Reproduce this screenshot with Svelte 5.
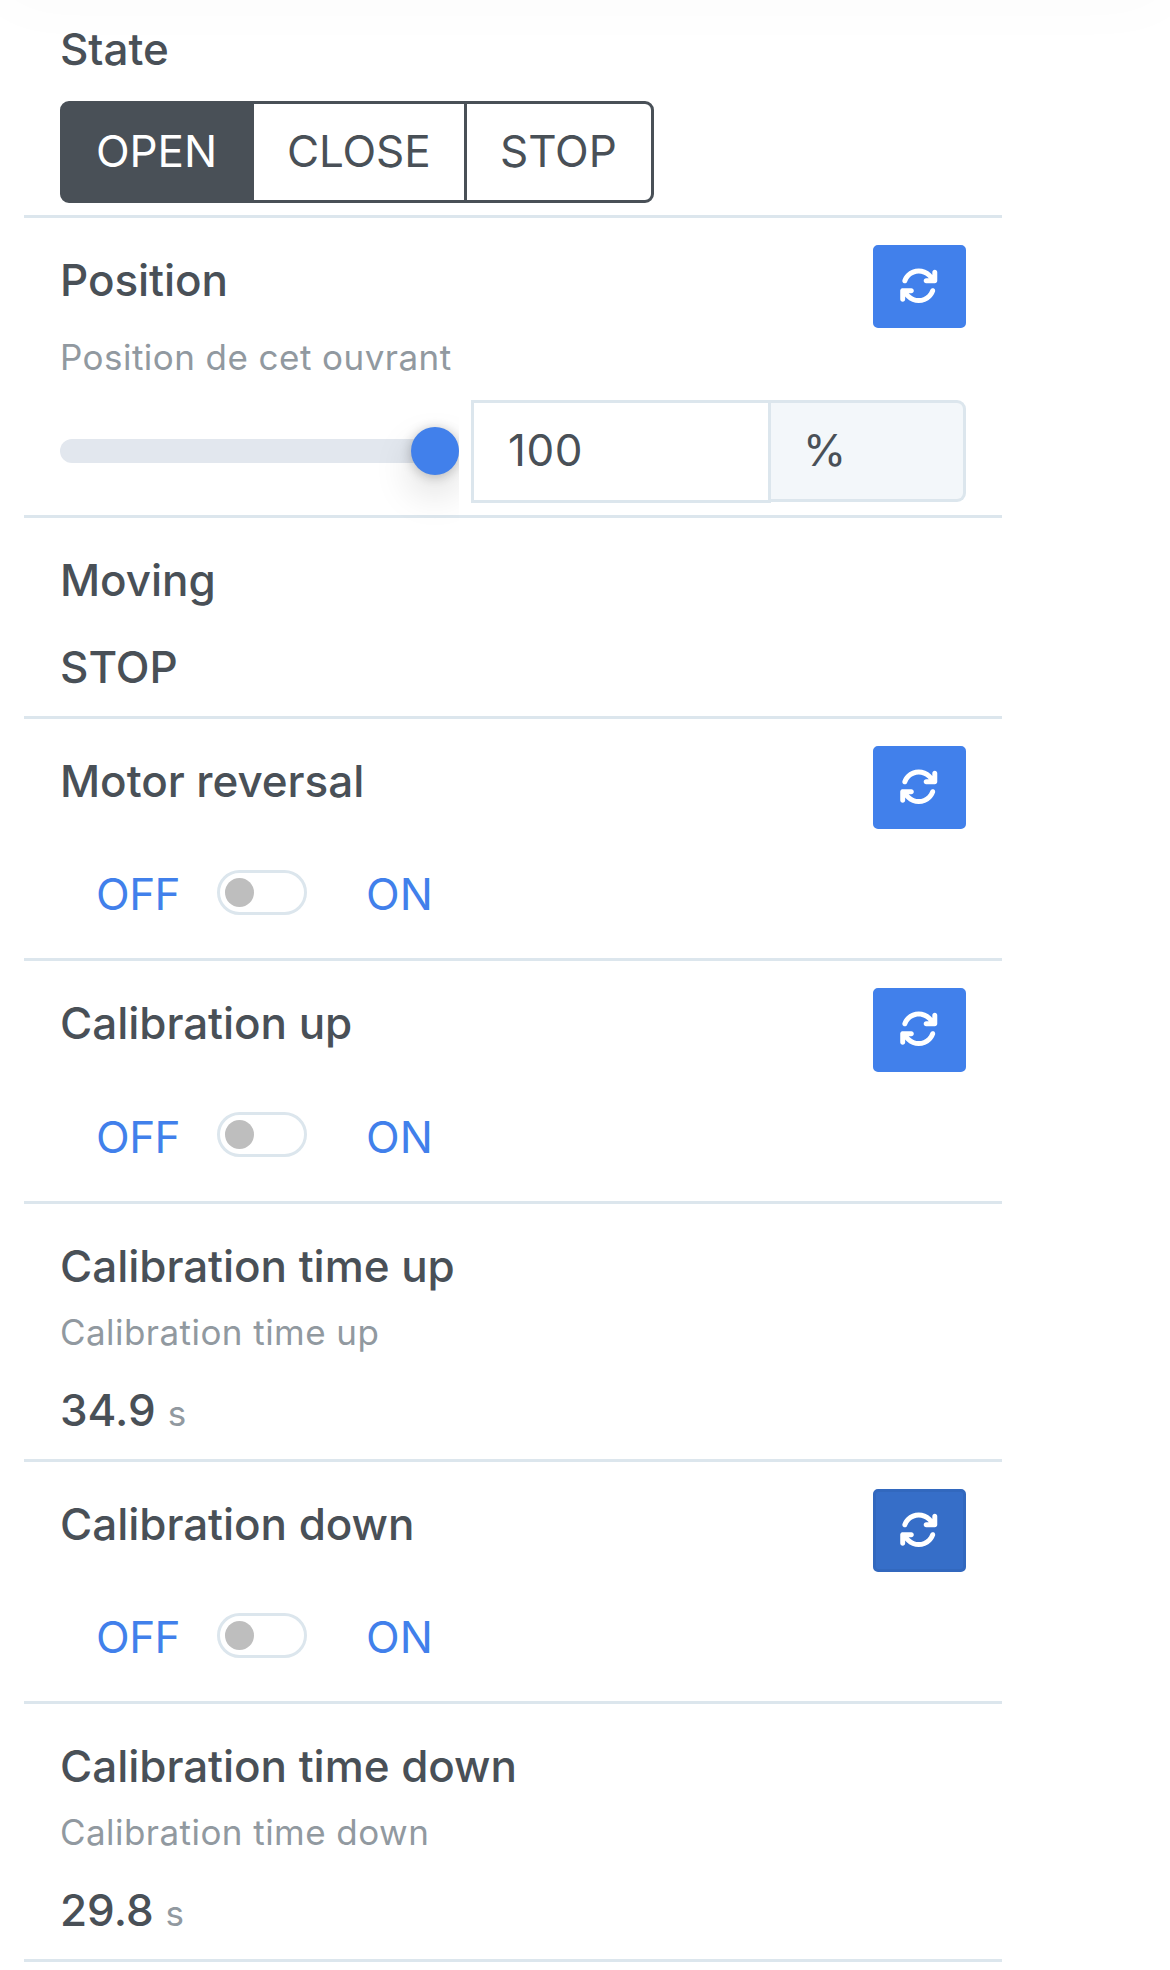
<script lang="ts">
	type Feature = {
		kind: 'state' | 'position' | 'value' | 'switch';
		label: string;
		description?: string;
		value?: string;
		unit?: string;
		refresh?: boolean;
		active?: boolean;
	};

	const features: Feature[] = [
		{ kind: 'state', label: 'State' },
		{
			kind: 'position',
			label: 'Position',
			description: 'Position de cet ouvrant',
			refresh: true
		},
		{ kind: 'value', label: 'Moving', value: 'STOP' },
		{ kind: 'switch', label: 'Motor reversal', refresh: true },
		{ kind: 'switch', label: 'Calibration up', refresh: true },
		{
			kind: 'value',
			label: 'Calibration time up',
			description: 'Calibration time up',
			value: '34.9',
			unit: 's'
		},
		{ kind: 'switch', label: 'Calibration down', refresh: true, active: true },
		{
			kind: 'value',
			label: 'Calibration time down',
			description: 'Calibration time down',
			value: '29.8',
			unit: 's'
		}
	];

	const states = ['OPEN', 'CLOSE', 'STOP'];

	let selected = $state('OPEN');
	let position = $state(100);
</script>

<main class="page">
	<div class="header-shadow"></div>

	<ul class="features">
		{#each features as feature}
			<li class="feature feature--{feature.kind}" class:has-description={feature.description}>
				<div class="feature__head" class:feature__head--action={feature.refresh}>
					<h3 class="feature__label">{feature.label}</h3>
					{#if feature.refresh}
						<button class="refresh" class:active={feature.active} aria-label="Refresh">
							<svg viewBox="0 0 512 512" aria-hidden="true">
								<path
									d="M105.1 202.6c7.7-21.8 20.2-42.3 37.8-59.8c62.5-62.5 163.8-62.5 226.3 0L386.3 160H352c-17.7 0-32 14.3-32 32s14.3 32 32 32H463.5h.4c17.7 0 32-14.3 32-32V80c0-17.7-14.3-32-32-32s-32 14.3-32 32v35.2L414.4 97.6c-87.5-87.5-229.3-87.5-316.8 0C73.2 122 55.6 150.7 44.8 181.4c-5.9 16.7 2.9 34.9 19.5 40.8s34.9-2.9 40.8-19.5zM39 289.3c-5 1.5-9.8 4.2-13.7 8.2c-4 4-6.7 8.8-8.1 14c-.3 1.2-.6 2.5-.8 3.8c-.3 1.7-.4 3.4-.4 5.1V432c0 17.7 14.3 32 32 32s32-14.3 32-32V396.9l17.6 17.5c87.5 87.4 229.3 87.4 316.7 0c24.4-24.4 42.1-53.1 52.9-83.7c5.9-16.7-2.9-34.9-19.5-40.8s-34.9 2.9-40.8 19.5c-7.7 21.8-20.2 42.3-37.8 59.8c-62.5 62.5-163.8 62.5-226.3 0l-.1-.1L125.6 352H160c17.7 0 32-14.3 32-32s-14.3-32-32-32H48.4c-1.6 0-3.2 .1-4.8 .3s-3.1 .5-4.6 1z"
								/>
							</svg>
						</button>
					{/if}
				</div>

				{#if feature.description}
					<p class="feature__description">{feature.description}</p>
				{/if}

				{#if feature.kind === 'state'}
					<div class="button-group">
						{#each states as state}
							<button
								class="button-group__item"
								class:selected={selected === state}
								onclick={() => (selected = state)}>{state}</button
							>
						{/each}
					</div>
				{:else if feature.kind === 'position'}
					<div class="position">
						<div class="position__range">
							<input type="range" min="0" max="100" aria-label="Position" bind:value={position} />
						</div>
						<input class="position__input" type="text" aria-label="Value" bind:value={position} />
						<span class="position__unit">%</span>
					</div>
				{:else if feature.kind === 'switch'}
					<div class="toggle">
						<span class="toggle__off">OFF</span>
						<span class="toggle__track"></span>
						<span class="toggle__on">ON</span>
					</div>
				{:else}
					<p class="feature__value">
						{feature.value}{#if feature.unit}<small>{feature.unit}</small>{/if}
					</p>
				{/if}
			</li>
		{/each}
	</ul>
</main>

<style>
	:global(body) {
		background-color: #fff;
	}

	.page {
		--text: #495057;
		--muted: #9199a0;
		--border: #dce6ed;
		--primary: #4180eb;

		position: relative;
		display: flow-root;
		height: 1970px;
		overflow: hidden;
		box-sizing: border-box;
		color: var(--text);
		font-family: Inter, 'Liberation Sans', sans-serif;
		font-size: 44px;
		line-height: 60px;
	}

	.page * {
		box-sizing: border-box;
	}

	button,
	input {
		margin: 0;
		font: inherit;
		color: inherit;
	}

	.header-shadow {
		position: absolute;
		top: -120px;
		left: 0;
		right: 0;
		height: 120px;
		box-shadow: 0 0 72px rgba(0, 0, 0, 0.025);
	}

	.features {
		width: 978px;
		margin: -13px 0 0 24px;
		padding: 0;
		list-style: none;
	}

	.feature {
		height: 201px;
		padding: 27px 36px 0;
		border-bottom: 3px solid var(--border);
	}

	.feature--state {
		height: 231px;
	}

	.feature--position {
		height: 300px;
	}

	.feature--switch {
		height: 242.4px;
	}

	.feature--value.has-description {
		height: 258px;
	}

	.feature__head {
		display: flex;
		justify-content: space-between;
		height: 72px;
	}

	.feature__head--action {
		height: 83.2px;
	}

	.feature__label {
		margin: 0;
		padding-top: 5px;
		font-size: 44px;
		font-weight: 500;
		letter-spacing: -0.05px;
	}

	.feature__description {
		margin: 4px 0 0;
		color: var(--muted);
		font-size: 35px;
		line-height: 50px;
		letter-spacing: 0.45px;
	}

	.feature__value {
		margin: 20px 0 0;
		font-weight: 500;
	}

	.has-description .feature__value {
		margin-top: 23px;
	}

	.feature__value small {
		margin-left: 12px;
		color: var(--muted);
		font-size: 35px;
		font-weight: 400;
	}

	.refresh {
		display: flex;
		align-items: center;
		justify-content: center;
		width: 93px;
		height: 83.2px;
		padding: 0 2px 2px 0;
		background-color: var(--primary);
		border: 3px solid var(--primary);
		border-radius: 5px;
	}

	.refresh.active {
		background-color: #366ec8;
		border-color: #3268be;
	}

	.refresh svg {
		width: 39.5px;
		height: 39.5px;
		fill: #fff;
	}

	.button-group {
		display: flex;
		margin-top: 15px;
	}

	.button-group__item {
		width: 194px;
		height: 102px;
		padding: 17px 0 19px 33px;
		text-align: left;
		letter-spacing: -0.1px;
		background-color: #fff;
		border: 3px solid var(--text);
	}

	.button-group__item + .button-group__item {
		width: 216px;
		margin-left: -3px;
	}

	.button-group__item:first-child {
		border-radius: 9px 0 0 9px;
	}

	.button-group .button-group__item:last-child {
		width: 190px;
		border-radius: 0 9px 9px 0;
	}

	.button-group__item.selected {
		z-index: 1;
		color: #fff;
		background-color: var(--text);
	}

	.position {
		display: flex;
		align-items: flex-start;
		margin-top: 17.8px;
	}

	/* the thumb's shadow is cut at the right end of the track */
	.position__range {
		display: flex;
		align-items: center;
		width: 399px;
		height: 102px;
		margin-right: 12px;
		clip-path: inset(-30px 0 -60px -40px);
	}

	.position__range input {
		width: 100%;
		height: 48px;
		appearance: none;
		background: none;
	}

	.position__range input::-webkit-slider-runnable-track {
		height: 24px;
		background-color: #e2e7ee;
		border-radius: 12px;
	}

	.position__range input::-webkit-slider-thumb {
		width: 48px;
		height: 48px;
		margin-top: -12px;
		appearance: none;
		background-color: var(--primary);
		border-radius: 50%;
		box-shadow:
			0 1.5px 12px rgba(0, 0, 0, 0.24),
			0 18px 39px rgba(0, 0, 0, 0.15);
	}

	.position__input {
		width: 300px;
		height: 103px;
		padding: 17px 33px 20px 34px;
		letter-spacing: 0.6px;
		background-color: #fff;
		border: 3px solid var(--border);
		border-radius: 0;
	}

	.position__unit {
		width: 195px;
		height: 102px;
		padding: 17px 0 0 32px;
		background-color: #f3f7fa;
		border: 3px solid var(--border);
		border-left: 0;
		border-radius: 0 9px 9px 0;
	}

	.toggle {
		display: flex;
		align-items: center;
		height: 60px;
		margin-top: 35px;
		color: var(--primary);
	}

	.toggle__off {
		width: 157px;
		padding-left: 36px;
		letter-spacing: -0.5px;
	}

	.toggle__track {
		width: 90px;
		height: 45px;
		margin: 0 59px 3.4px 0;
		padding: 5px;
		border: 3px solid var(--border);
		border-radius: 23px;
	}

	.toggle__track::before {
		content: '';
		display: block;
		width: 29px;
		height: 29px;
		background-color: #bebebe;
		border-radius: 50%;
	}
</style>
